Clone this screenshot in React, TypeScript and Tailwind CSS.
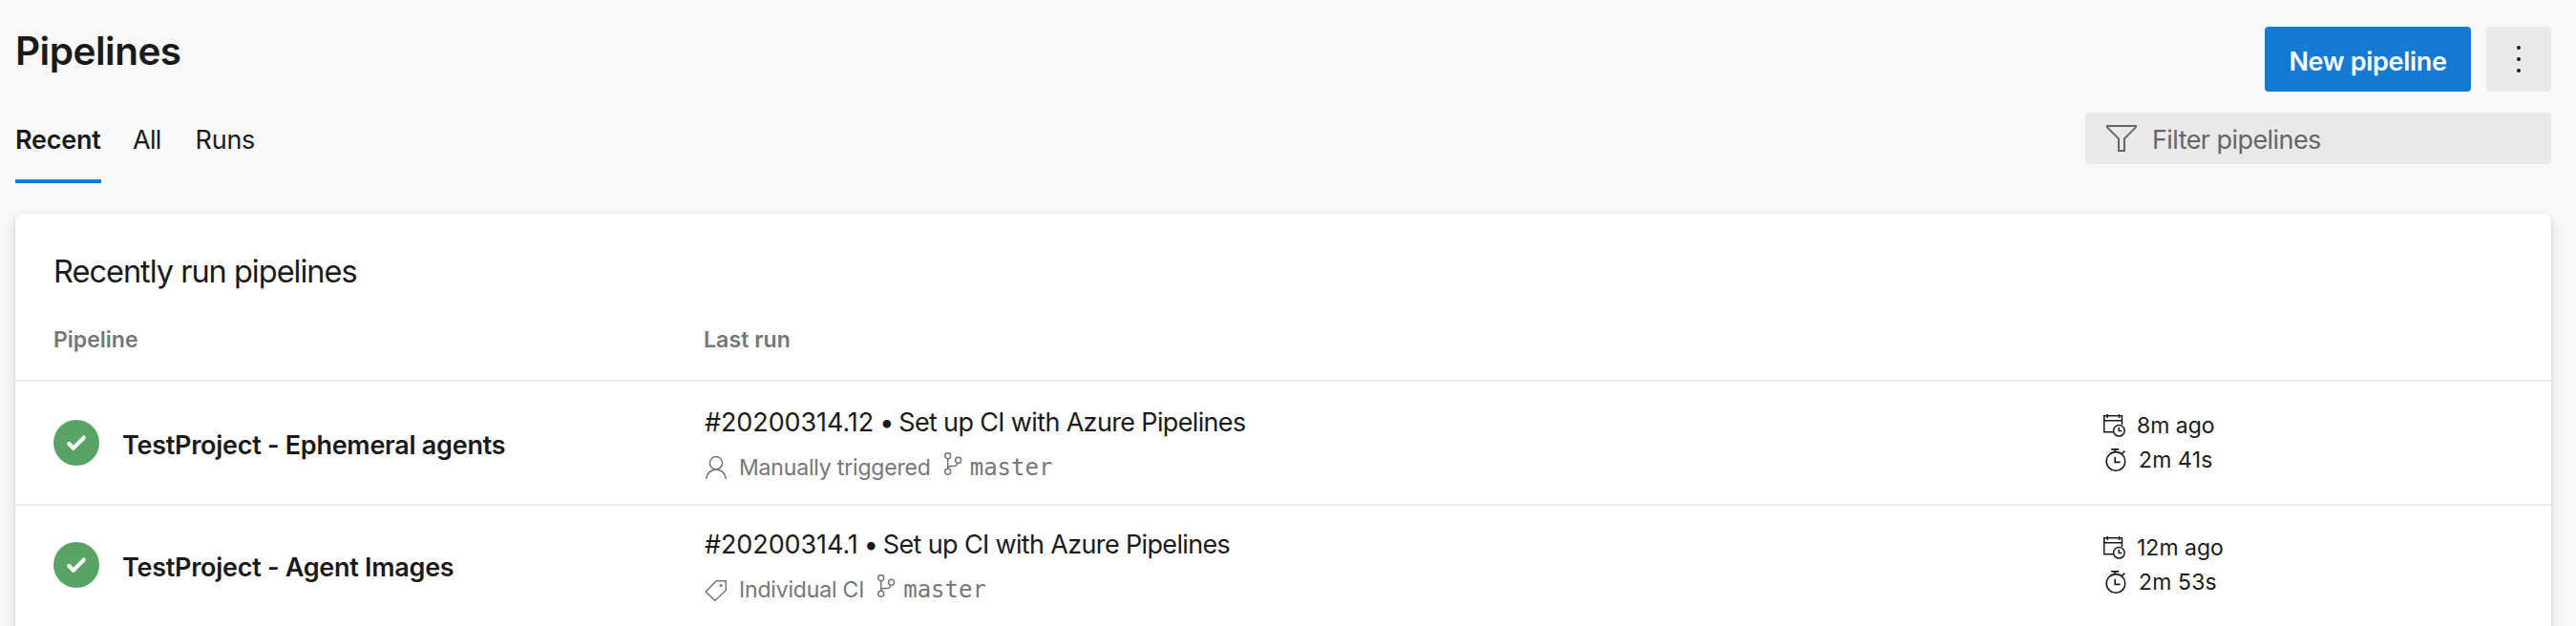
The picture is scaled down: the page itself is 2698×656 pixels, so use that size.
import type { ReactNode } from "react";

type Run = {
  name: string;
  number: string;
  message: string;
  trigger: string;
  triggerIcon: "user" | "tag";
  branch: string;
  ago: string;
  duration: string;
};

const runs: Run[] = [
  {
    name: "TestProject - Ephemeral agents",
    number: "#20200314.12",
    message: "Set up CI with Azure Pipelines",
    trigger: "Manually triggered",
    triggerIcon: "user",
    branch: "master",
    ago: "8m ago",
    duration: "2m 41s",
  },
  {
    name: "TestProject - Agent Images",
    number: "#20200314.1",
    message: "Set up CI with Azure Pipelines",
    trigger: "Individual CI",
    triggerIcon: "tag",
    branch: "master",
    ago: "12m ago",
    duration: "2m 53s",
  },
];

function UserIcon() {
  return (
    <svg className="h-6 w-6 shrink-0" viewBox="0 0 24 24" fill="none" stroke="currentColor" strokeWidth="1.5">
      <circle cx="12" cy="7.2" r="6.6" />
      <path d="M1.9 24A10.1 10.1 0 0 1 22.1 24" />
    </svg>
  );
}

function TagIcon() {
  return (
    <svg className="h-6 w-6 shrink-0" viewBox="0 0 24 24" fill="none" stroke="currentColor" strokeWidth="1.5">
      <path d="M1.2 14 12.3 2.7H22.3V12.7L10.8 23.2Z" />
      <circle cx="17.1" cy="7.4" r="1.5" fill="currentColor" stroke="none" />
    </svg>
  );
}

function BranchIcon() {
  return (
    <svg className="-mt-2 h-6 w-5 shrink-0" viewBox="0 0 20 24" fill="none" stroke="currentColor" strokeWidth="1.5">
      <circle cx="4.7" cy="3.7" r="3" />
      <circle cx="15.6" cy="8.2" r="3" />
      <circle cx="4.7" cy="20.3" r="3" />
      <path d="M4.7 6.7V17.3M15 11.2C14.4 13.8 13 14.6 10.5 14.6H8.2C6.2 14.6 5 15.4 4.7 17" />
    </svg>
  );
}

function CalendarIcon() {
  return (
    <svg className="h-6 w-[26px] shrink-0" viewBox="0 0 26 24" fill="none" stroke="currentColor" strokeWidth="1.5">
      <path d="M11 18.7H1.8V1.7H20.5V11M1.8 6.8H20.5M5.2 0V4M17.6 0V4" />
      <circle cx="17.4" cy="17.3" r="5.8" />
      <path d="M17.2 13.8V17.4H20.4" />
    </svg>
  );
}

function StopwatchIcon() {
  return (
    <svg className="ml-0.5 h-6 w-6 shrink-0" viewBox="0 0 24 24" fill="none" stroke="currentColor" strokeWidth="1.6">
      <circle cx="12" cy="13.4" r="9.8" />
      <path d="M7.2 .9H15.2M11.2 .9V4M18.2 5.8 21.4 2.6M11.2 8.7V14.4H16.6" />
    </svg>
  );
}

function FilterIcon() {
  return (
    <svg className="h-7 w-8 shrink-0" viewBox="0 0 32 28" fill="none" stroke="currentColor" strokeWidth="2">
      <path d="M1 1H31V2.4L19 14.4V27H13V14.4L1 2.4Z" />
    </svg>
  );
}

function SuccessIcon() {
  return (
    <svg className="h-12 w-12 shrink-0" viewBox="0 0 48 48" fill="none">
      <circle cx="24" cy="24" r="24" fill="#5aa366" />
      <path d="M16.3 25 20.8 29.8 31.8 18.6" stroke="#fff" strokeWidth="4.2" strokeLinecap="round" strokeLinejoin="round" />
    </svg>
  );
}

function Tab({ children }: { children: ReactNode }) {
  return <button className="pt-px pb-[23px] text-[27px] leading-9">{children}</button>;
}

function PipelineRow({ run, divided }: { run: Run; divided: boolean }) {
  return (
    <div className={`flex h-32 pl-10 ${divided ? "shadow-[inset_0_2px_0_#eaeaea]" : ""}`}>
      <div className="flex w-[680px] items-center">
        <SuccessIcon />
        <span className="ml-6 pt-1.5 text-[27px] leading-9 font-semibold tracking-[-0.27px]">{run.name}</span>
      </div>
      <div className="w-[1466px] pt-[25px] pl-0.5">
        <div className="text-[27px] leading-9">
          <span className="tracking-[-0.1px]">{run.number}</span>
          <span className="tracking-[-1.4px]"> • </span>
          <span className="tracking-[-0.65px]">{run.message}</span>
        </div>
        <div className="mt-[13px] flex h-8 items-center text-[23px] leading-8 text-[#767676]">
          {run.triggerIcon === "user" ? <UserIcon /> : <TagIcon />}
          <span className="mr-[13px] ml-3 tracking-[-0.18px]">{run.trigger}</span>
          <BranchIcon />
          <span className="ml-2 font-['DejaVu_Sans_Mono',monospace] text-[24px]">{run.branch}</span>
        </div>
      </div>
      <div className="flex flex-col justify-center text-[23px] leading-9">
        <div className="flex items-center">
          <CalendarIcon />
          <span className="ml-2.5">{run.ago}</span>
        </div>
        <div className="flex items-center">
          <StopwatchIcon />
          <span className="ml-3 tracking-[0.15px]">{run.duration}</span>
        </div>
      </div>
    </div>
  );
}

export default function App() {
  return (
    <div className="flex h-[656px] w-full flex-col overflow-hidden bg-[#f8f8f8] pr-[26px] pl-4 font-['Inter',sans-serif] whitespace-nowrap text-[#1a1a1a]">
      <header className="flex h-48 shrink-0 justify-between">
        <div className="flex flex-col justify-between pt-7">
          <h1 className="text-[40.5px] leading-[52px] font-semibold tracking-[-0.5px]">Pipelines</h1>
          <nav className="flex items-start gap-[33px]">
            <button className="w-[90px] border-b-4 border-[#147ad3] pt-px pb-[23px] text-left text-[27px] leading-9 font-semibold tracking-[-0.26px]">
              Recent
            </button>
            <Tab>
              <span className="tracking-[-0.7px]">All</span>
            </Tab>
            <Tab>
              <span className="ml-[3px] tracking-[-0.28px]">Runs</span>
            </Tab>
          </nav>
        </div>
        <div className="flex flex-col items-end pt-7">
          <div className="flex gap-4">
            <button className="h-[68px] w-[216px] rounded-[4px] bg-[#147ad3] pt-1.5 text-[27px] leading-9 font-semibold tracking-[-0.31px] text-white">
              New pipeline
            </button>
            <button className="flex h-[68px] w-[68px] flex-col items-center justify-center gap-2 rounded-[4px] bg-[#e9e9e9]">
              <span className="h-1 w-1 rounded-full bg-[#1a1a1a]" />
              <span className="h-1 w-1 rounded-full bg-[#1a1a1a]" />
              <span className="h-1 w-1 rounded-full bg-[#1a1a1a]" />
            </button>
          </div>
          <div className="mt-[22px] flex h-[54px] w-[488px] items-center rounded-[4px] bg-[#e9e9e9] pl-[22px] text-[#666]">
            <FilterIcon />
            <span className="ml-4 pt-1 text-[27px] leading-9 tracking-[-0.57px]">Filter pipelines</span>
          </div>
        </div>
      </header>
      <main className="mt-8 h-[480px] shrink-0 rounded-[8px] bg-white shadow-[0_6.4px_14.4px_rgba(0,0,0,0.132),0_1.2px_3.6px_rgba(0,0,0,0.108)]">
        <h2 className="pt-[39px] pb-[5px] pl-10 text-[32.5px] leading-[44px] tracking-[-1px]">Recently run pipelines</h2>
        <div className="flex border-b-2 border-[#eaeaea] pt-7 pb-[26px] pl-10 text-[23px] leading-8 font-semibold text-[#767676]">
          <div className="w-[681px]">Pipeline</div>
          <div className="tracking-[0.1px]">Last run</div>
        </div>
        {runs.map((run, i) => (
          <PipelineRow key={run.name} run={run} divided={i > 0} />
        ))}
      </main>
    </div>
  );
}
